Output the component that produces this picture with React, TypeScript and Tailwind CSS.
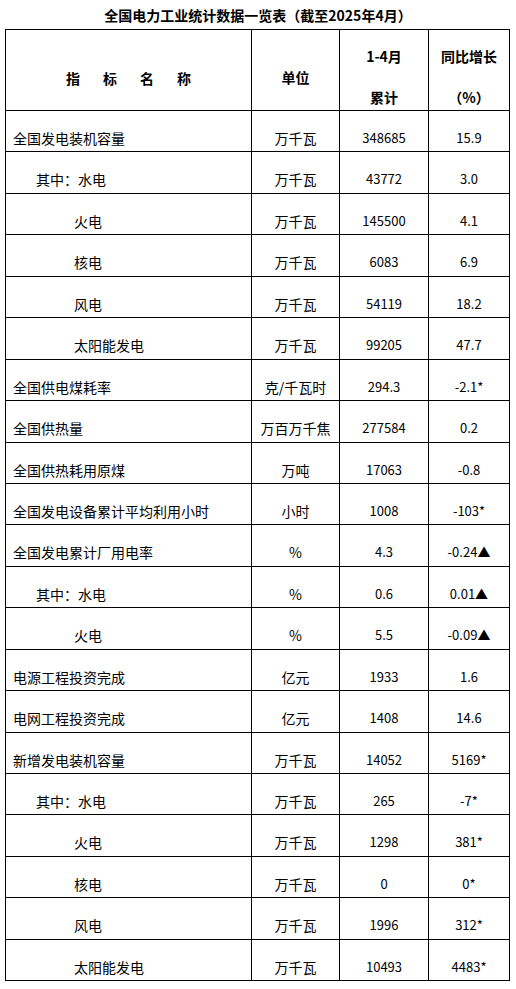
type Row = {
  name: string;
  indent: 0 | 1 | 2;
  unit: string;
  total: string;
  yoy: string;
};

const rows: Row[] = [
  { name: "全国发电装机容量", indent: 0, unit: "万千瓦", total: "348685", yoy: "15.9" },
  { name: "其中：水电", indent: 1, unit: "万千瓦", total: "43772", yoy: "3.0" },
  { name: "火电", indent: 2, unit: "万千瓦", total: "145500", yoy: "4.1" },
  { name: "核电", indent: 2, unit: "万千瓦", total: "6083", yoy: "6.9" },
  { name: "风电", indent: 2, unit: "万千瓦", total: "54119", yoy: "18.2" },
  { name: "太阳能发电", indent: 2, unit: "万千瓦", total: "99205", yoy: "47.7" },
  { name: "全国供电煤耗率", indent: 0, unit: "克/千瓦时", total: "294.3", yoy: "-2.1*" },
  { name: "全国供热量", indent: 0, unit: "万百万千焦", total: "277584", yoy: "0.2" },
  { name: "全国供热耗用原煤", indent: 0, unit: "万吨", total: "17063", yoy: "-0.8" },
  { name: "全国发电设备累计平均利用小时", indent: 0, unit: "小时", total: "1008", yoy: "-103*" },
  { name: "全国发电累计厂用电率", indent: 0, unit: "%", total: "4.3", yoy: "-0.24▲" },
  { name: "其中：水电", indent: 1, unit: "%", total: "0.6", yoy: "0.01▲" },
  { name: "火电", indent: 2, unit: "%", total: "5.5", yoy: "-0.09▲" },
  { name: "电源工程投资完成", indent: 0, unit: "亿元", total: "1933", yoy: "1.6" },
  { name: "电网工程投资完成", indent: 0, unit: "亿元", total: "1408", yoy: "14.6" },
  { name: "新增发电装机容量", indent: 0, unit: "万千瓦", total: "14052", yoy: "5169*" },
  { name: "其中：水电", indent: 1, unit: "万千瓦", total: "265", yoy: "-7*" },
  { name: "火电", indent: 2, unit: "万千瓦", total: "1298", yoy: "381*" },
  { name: "核电", indent: 2, unit: "万千瓦", total: "0", yoy: "0*" },
  { name: "风电", indent: 2, unit: "万千瓦", total: "1996", yoy: "312*" },
  { name: "太阳能发电", indent: 2, unit: "万千瓦", total: "10493", yoy: "4483*" },
];

const indentClass = {
  0: "pl-[7px]",
  1: "pl-[30px]",
  2: "pl-[68px]",
};

const font = "font-['Noto_Sans_CJK_SC','Noto_Sans',sans-serif]";

export default function App() {
  return (
    <div className={`min-h-screen bg-white text-black ${font}`}>
      <div className="h-[29px] pt-[5px] text-center text-[14px] font-bold leading-[20px]">
        全国电力工业统计数据一览表（截至2025年4月）
      </div>

      <table className="ml-[5px] w-[504px] table-fixed border-collapse">
        <colgroup>
          <col className="w-[246px]" />
          <col className="w-[88px]" />
          <col className="w-[89px]" />
          <col className="w-[81px]" />
        </colgroup>
        <thead>
          <tr>
            <th className="border border-black p-0 align-top font-bold">
              <div className="flex h-[80px] justify-center gap-[23px] pt-[38px] text-[14px] leading-[20px]">
                <span>指</span>
                <span>标</span>
                <span>名</span>
                <span>称</span>
              </div>
            </th>
            <th className="border border-black p-0 align-top font-bold">
              <div className="h-[80px] pt-[37px] text-center text-[14px] leading-[20px]">
                单位
              </div>
            </th>
            <th className="border border-black p-0 align-top font-bold">
              <div className="h-[80px] pt-[6px] text-center text-[14px] leading-[41px]">
                <div>1-4月</div>
                <div>累计</div>
              </div>
            </th>
            <th className="border border-black p-0 align-top font-bold">
              <div className="h-[80px] pt-[6px] text-center text-[14px] leading-[41px]">
                <div>同比增长</div>
                <div>（%）</div>
              </div>
            </th>
          </tr>
        </thead>
        <tbody>
          {rows.map((r, i) => (
            <tr key={i}>
              <td className="border border-black p-0 align-top">
                <div className={`h-[40.45px] pt-[17px] text-[14px] leading-[20px] ${indentClass[r.indent]}`}>
                  {r.name}
                </div>
              </td>
              <td className="border border-black p-0 align-top">
                <div className="h-[40.45px] pt-[17px] text-center text-[14px] leading-[20px] whitespace-nowrap">
                  {r.unit}
                </div>
              </td>
              <td className="border border-black p-0 align-top">
                <div className="h-[40.45px] pt-[17px] text-center text-[13px] leading-[20px]">
                  {r.total}
                </div>
              </td>
              <td className="border border-black p-0 align-top">
                <div className="h-[40.45px] pt-[17px] text-center text-[13px] leading-[20px]">
                  {r.yoy}
                </div>
              </td>
            </tr>
          ))}
        </tbody>
      </table>
    </div>
  );
}
